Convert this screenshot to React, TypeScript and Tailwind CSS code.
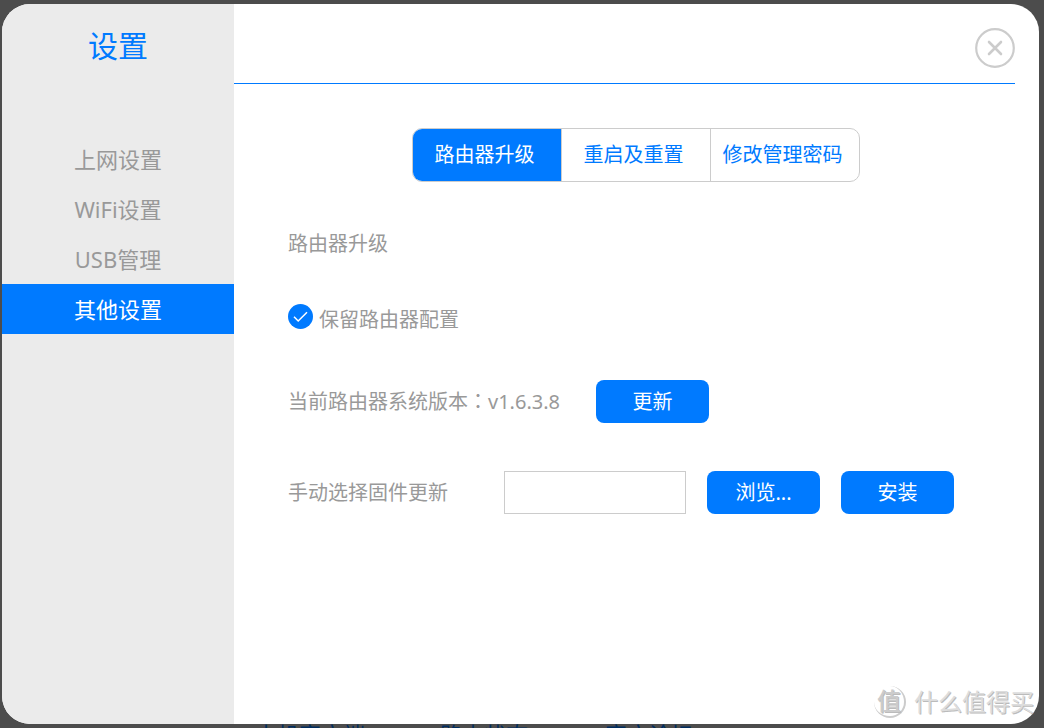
import { useState } from "react";

const menu = ["上网设置", "WiFi设置", "USB管理", "其他设置"];
const tabs = ["路由器升级", "重启及重置", "修改管理密码"];
const actionClass =
  "h-[43px] w-[113px] shrink-0 rounded-lg bg-[#007aff] text-center text-xl leading-6 text-white";

export default function App() {
  const [section, setSection] = useState("其他设置");
  const [tab, setTab] = useState("路由器升级");
  const [keep, setKeep] = useState(true);

  return (
    <div className="relative flex h-screen flex-col overflow-hidden bg-[#4c4c4c] pt-1 pr-[5px] pl-0.5 font-['Noto_Sans','Noto_Sans_CJK_SC',sans-serif] font-normal text-[#999]">
      <div className="relative flex min-h-0 flex-1 overflow-hidden rounded-[28px] bg-white">
        <aside className="w-[232px] shrink-0 bg-[#ebebeb]">
          <h1 className="pt-[22px] text-center text-3xl leading-10 font-normal text-[#007aff]">设置</h1>
          <nav className="mt-[68px] flex flex-col">
            {menu.map((item) => (
              <button
                key={item}
                type="button"
                onClick={() => setSection(item)}
                className={
                  item === section
                    ? "h-[50px] bg-[#007aff] text-[22px] leading-8 text-white"
                    : "h-[50px] text-[22px] leading-8 text-[#999]"
                }
              >
                {item}
              </button>
            ))}
          </nav>
        </aside>

        <main className="min-w-0 flex-1">
          <header className="mr-6 flex h-20 items-center justify-end border-b border-[#007aff] pt-2">
            <button type="button" aria-label="关闭" className="size-10">
              <svg viewBox="0 0 40 40" fill="none" stroke="#ccc" className="size-10">
                <circle cx="20" cy="20" r="18.8" strokeWidth="2.2" />
                <path d="M14 14l12 12M26 14L14 26" strokeWidth="2.6" strokeLinecap="round" />
              </svg>
            </button>
          </header>

          <div className="mt-11 flex justify-center pr-0.5">
            <div className="flex h-[54px] w-[448px] divide-x divide-[#ccc] overflow-hidden rounded-[10px] border border-[#ccc]">
              {tabs.map((item) => (
                <button
                  key={item}
                  type="button"
                  onClick={() => setTab(item)}
                  className={
                    item === tab
                      ? "flex-1 bg-[#007aff] pr-1 text-xl text-white"
                      : "flex-1 pr-1 text-xl text-[#007aff]"
                  }
                >
                  {item}
                </button>
              ))}
            </div>
          </div>

          <section className="pl-[54px] text-xl leading-8">
            <h2 className="mt-[46px] font-normal">路由器升级</h2>

            <label className="mt-11 flex items-start gap-1.5">
              <input
                type="checkbox"
                checked={keep}
                onChange={() => setKeep(!keep)}
                className="peer sr-only"
              />
              <svg viewBox="0 0 25 25" fill="none" className="size-[25px]">
                <circle cx="12.5" cy="12.5" r="12.5" fill={keep ? "#007aff" : "#ccc"} />
                {keep && <path d="M6 12.8l4.2 4.2L19 8.2" stroke="#fff" strokeWidth="1.5" />}
              </svg>
              <span>保留路由器配置</span>
            </label>

            <div className="mt-11 flex items-center">
              <p className="w-[308px]">
                当前路由器系统版本<span className="font-['Noto_Sans_CJK_TC',sans-serif]" lang="zh-TW">：</span>v1.6.3.8
              </p>
              <button type="button" className={actionClass}>更新</button>
            </div>

            <div className="mt-12 flex items-center">
              <label htmlFor="firmware" className="w-[216px]">手动选择固件更新</label>
              <input id="firmware" type="text" className="h-[43px] w-[182px] border border-[#ccc] px-2" />
              <div className="ml-[21px] flex gap-[21px]">
                <button type="button" className={actionClass}>浏览...</button>
                <button type="button" className={actionClass}>安装</button>
              </div>
            </div>
          </section>
        </main>
      </div>

      <footer className="flex h-1 shrink-0 overflow-hidden pl-[253px] text-[22px] leading-5 text-[#002c5f]">
        <span className="w-[185px] shrink-0">本机客户端</span>
        <span className="w-[165px] shrink-0">路由状态</span>
        <span className="shrink-0">官方论坛</span>
      </footer>

      <div className="absolute right-2.5 bottom-2.5 flex items-center gap-2 text-[#ddd] [text-shadow:1px_1px_0_#bbb]">
        <span className="flex size-8 items-center justify-center rounded-full border-r-2 border-b-2 border-[#ccc] text-2xl leading-8 font-medium text-[#ccc]">
          值
        </span>
        <span className="text-2xl leading-8">什么值得买</span>
      </div>
    </div>
  );
}
